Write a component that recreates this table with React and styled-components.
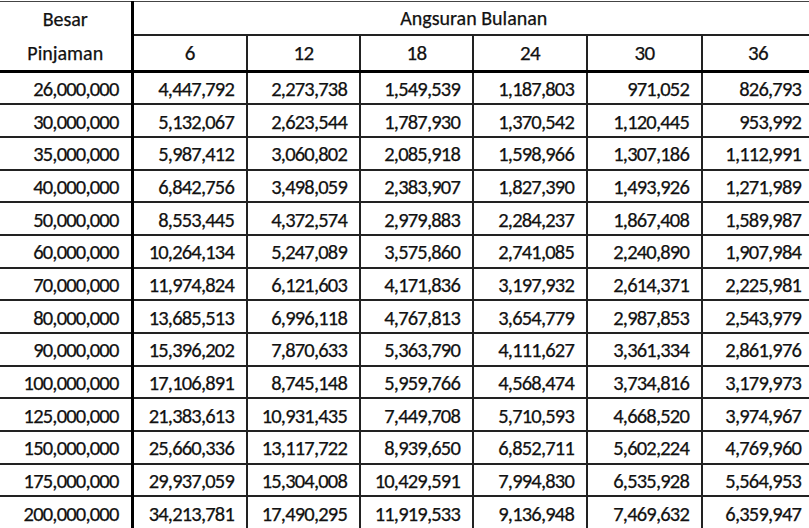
import React from 'react';
import styled, { createGlobalStyle } from 'styled-components';

const GlobalStyle = createGlobalStyle`
  html, body {
    margin: 0;
    padding: 0;
    background: #ffffff;
    overflow: hidden;
  }
`;

const tenor = ['6', '12', '18', '24', '30', '36'];
const widths = [132, 115, 113, 113, 114, 115, 112];

const rows = [
  ['26,000,000', '4,447,792', '2,273,738', '1,549,539', '1,187,803', '971,052', '826,793'],
  ['30,000,000', '5,132,067', '2,623,544', '1,787,930', '1,370,542', '1,120,445', '953,992'],
  ['35,000,000', '5,987,412', '3,060,802', '2,085,918', '1,598,966', '1,307,186', '1,112,991'],
  ['40,000,000', '6,842,756', '3,498,059', '2,383,907', '1,827,390', '1,493,926', '1,271,989'],
  ['50,000,000', '8,553,445', '4,372,574', '2,979,883', '2,284,237', '1,867,408', '1,589,987'],
  ['60,000,000', '10,264,134', '5,247,089', '3,575,860', '2,741,085', '2,240,890', '1,907,984'],
  ['70,000,000', '11,974,824', '6,121,603', '4,171,836', '3,197,932', '2,614,371', '2,225,981'],
  ['80,000,000', '13,685,513', '6,996,118', '4,767,813', '3,654,779', '2,987,853', '2,543,979'],
  ['90,000,000', '15,396,202', '7,870,633', '5,363,790', '4,111,627', '3,361,334', '2,861,976'],
  ['100,000,000', '17,106,891', '8,745,148', '5,959,766', '4,568,474', '3,734,816', '3,179,973'],
  ['125,000,000', '21,383,613', '10,931,435', '7,449,708', '5,710,593', '4,668,520', '3,974,967'],
  ['150,000,000', '25,660,336', '13,117,722', '8,939,650', '6,852,711', '5,602,224', '4,769,960'],
  ['175,000,000', '29,937,059', '15,304,008', '10,429,591', '7,994,830', '6,535,928', '5,564,953'],
  ['200,000,000', '34,213,781', '17,490,295', '11,919,533', '9,136,948', '7,469,632', '6,359,947'],
];

export default function App() {
  return (
    <Page>
      <GlobalStyle />
      <Sheet>
        <colgroup>
          {widths.map((w, i) => (
            <col key={i} style={{ width: w }} />
          ))}
        </colgroup>
        <thead>
          <HeadRow>
            <LabelCell rowSpan={2}>
              <Line>Besar</Line>
              <Line>Pinjaman</Line>
            </LabelCell>
            <GroupCell colSpan={6}>Angsuran Bulanan</GroupCell>
          </HeadRow>
          <HeadRow $last>
            {tenor.map((t) => (
              <TenorCell key={t}>{t}</TenorCell>
            ))}
          </HeadRow>
        </thead>
        <tbody>
          {rows.map((r) => (
            <DataRow key={r[0]}>
              {r.map((v, i) => (
                <Cell key={i} $first={i === 0}>{v}</Cell>
              ))}
            </DataRow>
          ))}
        </tbody>
      </Sheet>
    </Page>
  );
}

const Page = styled.div`
  width: 809px;
  height: 528px;
  overflow: hidden;
  padding-top: 1px;
  box-sizing: border-box;
  font-family: Carlito, Calibri, 'Liberation Sans Narrow', 'DejaVu Sans Condensed', Lato, sans-serif;
  color: #111;
  -webkit-text-stroke: 0.25px #111;
`;

const Sheet = styled.table`
  width: 814px;
  table-layout: fixed;
  border-collapse: collapse;
  font-size: 20px;
  border-top: 1px solid #444;
`;

const HeadRow = styled.tr`
  height: ${(p) => (p.$last ? '35px' : '33px')};
`;

const LabelCell = styled.th`
  font-weight: normal;
  padding: 0;
  text-align: center;
  border-right: 3px solid #000;
  border-bottom: 3px solid #000;
  vertical-align: top;
`;

const Line = styled.div`
  height: 34px;
  line-height: 34px;
`;

const GroupCell = styled.th`
  font-weight: normal;
  padding: 0;
  text-align: center;
  border-bottom: 2px solid #222;
`;

const TenorCell = styled.th`
  font-weight: normal;
  font-size: 21px;
  padding: 0;
  text-align: center;
  letter-spacing: -0.6px;
  border-right: 2px solid #222;
  border-bottom: 3px solid #000;
`;

const DataRow = styled.tr`
  height: 32.7px;
`;

const Cell = styled.td`
  padding: 2px 12px 0 0;
  font-size: 20.5px;
  text-align: right;
  white-space: nowrap;
  letter-spacing: -0.8px;
  border-bottom: 2px solid #222;
  border-right: ${(p) => (p.$first ? '3px solid #000' : '2px solid #222')};
`;
